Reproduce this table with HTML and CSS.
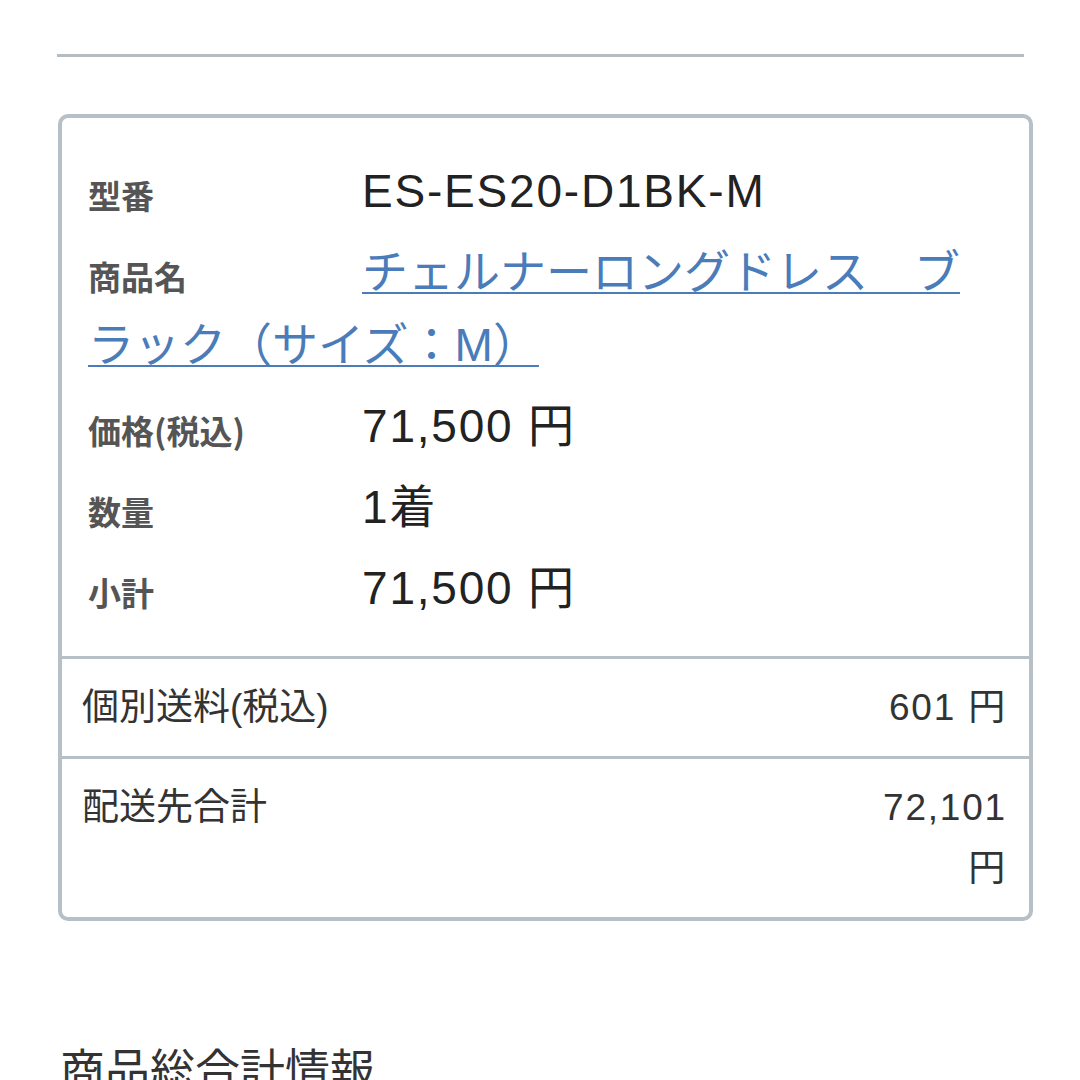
FILE: index.html
```html
<!DOCTYPE html>
<html lang="ja">
<head>
<meta charset="utf-8">
<title>配送先情報</title>
<link rel="stylesheet" href="styles.css">
</head>
<body>
<div class="page">
  <hr class="rule">
  <section class="card">
    <div class="items">
      <div class="row"><span class="label">型番</span><span class="value">ES-ES20-D1BK-M</span></div>
      <div class="row"><span class="label">商品名</span><a class="value link" href="#">チェルナーロングドレス　ブラック（サイズ：M）</a></div>
      <div class="row"><span class="label">価格(税込)</span><span class="value">71,500 円</span></div>
      <div class="row"><span class="label">数量</span><span class="value">1着</span></div>
      <div class="row"><span class="label">小計</span><span class="value">71,500 円</span></div>
    </div>
    <div class="sum-row">
      <div class="sum-label">個別送料(税込)</div>
      <div class="sum-value">601 円</div>
    </div>
    <div class="sum-row">
      <div class="sum-label">配送先合計</div>
      <div class="sum-value">72,101 円</div>
    </div>
  </section>
  <h2 class="section-title">商品総合計情報</h2>
</div>
</body>
</html>
```
FILE: styles.css
```css
html, body {
  margin: 0;
  padding: 0;
  background: #ffffff;
}
body {
  font-family: "Liberation Sans", "Noto Sans CJK JP", sans-serif;
  color: #222222;
  text-spacing-trim: space-all;
}
.page {
  padding: 54px 47px 0 57px;
  height: 1080px;
  box-sizing: border-box;
  overflow: hidden;
}
.rule {
  margin: 0 9px 0 0;
  border: 0;
  border-top: 3px solid #b5bcc2;
  height: 0;
}
.card {
  margin: 57px 0 0 1px;
  border: 4px solid #b7c0c7;
  border-radius: 10px;
}
.items {
  padding: 37px 40px 31px 26px;
  display: flex;
  flex-direction: column;
  gap: 8px;
}
.row {
  line-height: 73px;
  font-size: 46px;
}
.label {
  display: inline-block;
  width: 274px;
  font-size: 33px;
  line-height: 36px;
  font-weight: 700;
  color: #555555;
  font-family: "Noto Sans CJK JP", sans-serif;
  vertical-align: baseline;
  position: relative;
  top: 2px;
}
.value {
  color: #222222;
  line-height: 46px;
  letter-spacing: 1.8px;
}
.link {
  color: #4a7cba;
  text-decoration: underline;
  text-decoration-thickness: 2px;
  text-underline-offset: 4px;
  letter-spacing: 0;
}
.sum-row {
  display: flex;
  justify-content: space-between;
  align-items: flex-start;
  border-top: 3px solid #b7c0c7;
  padding: 18px 22px 18px 20px;
  font-size: 37px;
  line-height: 61px;
  color: #333333;
}
.sum-label {
  flex: 1;
}
.sum-value {
  width: 150px;
  text-align: right;
  letter-spacing: 1.8px;
}
.section-title {
  margin: 121px 0 0 3px;
  font-size: 45px;
  font-weight: 400;
  line-height: 60px;
  color: #333333;
}
```
